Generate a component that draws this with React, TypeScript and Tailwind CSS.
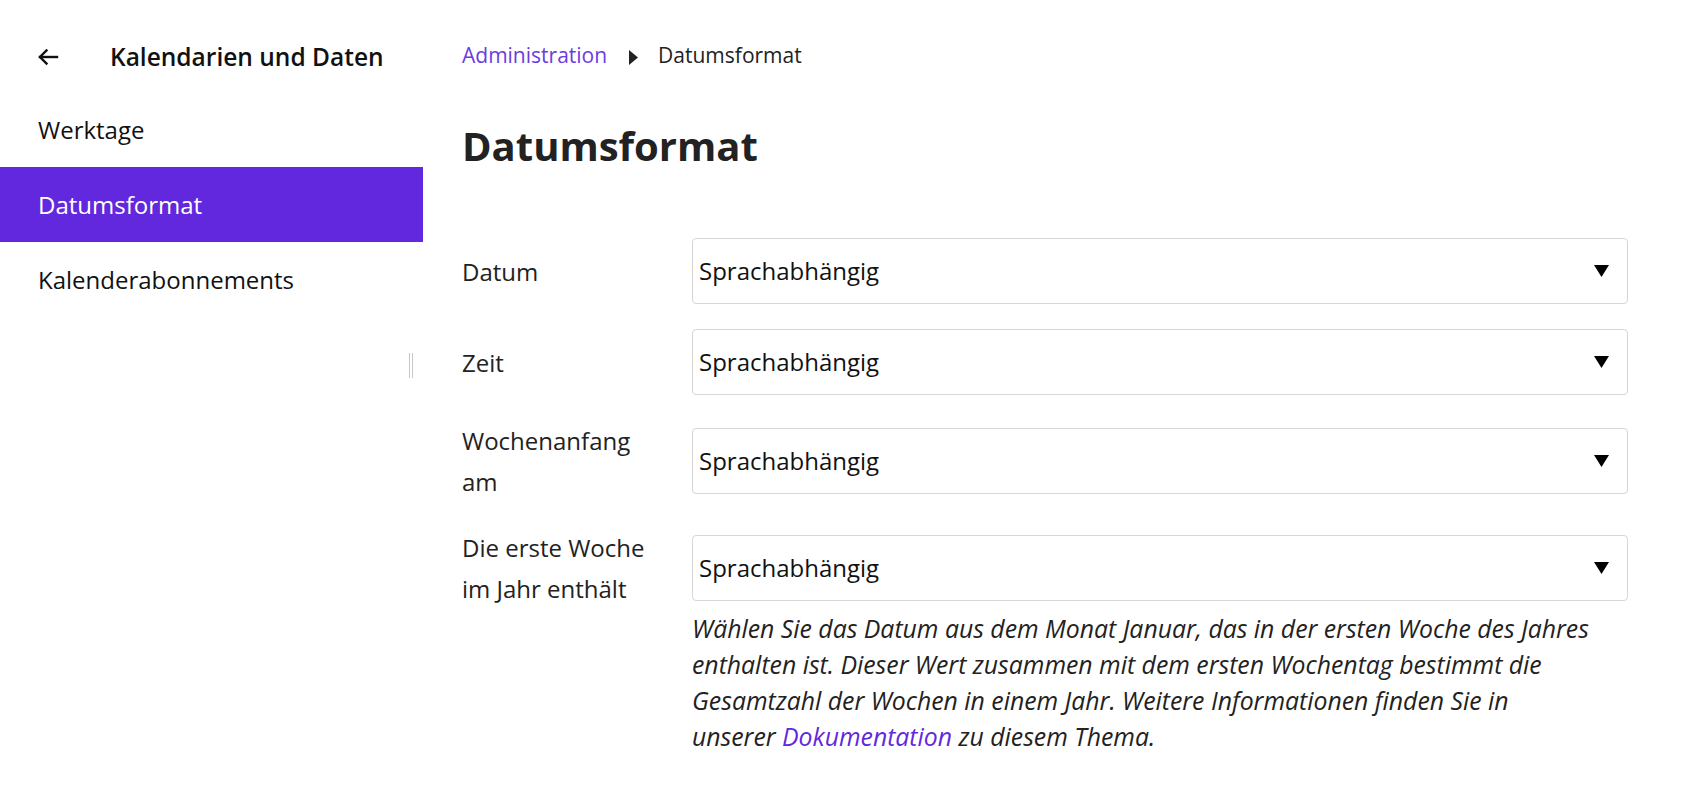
import { useState } from "react";

const FONT = "font-['Open_Sans',_'Noto_Sans',sans-serif]";

function ArrowBack() {
    return (
        <svg width="22" height="18" viewBox="0 0 22 18" fill="none" stroke="#111" strokeWidth="2.4" strokeLinecap="square">
            <path d="M20 9H3" />
            <path d="M9.5 2.5 3 9l6.5 6.5" />
        </svg>
    );
}

function SelectField({ value }: { value: string }) {
    return (
        <div className="relative flex-1">
            <select
                defaultValue={value}
                className="w-full h-[66px] appearance-none rounded-[4px] border border-[#d6d6d6] bg-white pl-[6px] pr-10 text-[24px] text-[#111] outline-none"
            >
                <option>Sprachabhängig</option>
                <option>TT.MM.JJJJ</option>
                <option>JJJJ-MM-TT</option>
            </select>
            {/* dropdown caret */}
            <svg className="pointer-events-none absolute right-[19px] top-[27px]" width="15" height="12" viewBox="0 0 15 12">
                <path d="M0 0h15L7.5 12z" fill="#000" />
            </svg>
        </div>
    );
}

function FormRow({ label, children }: { label: React.ReactNode; children?: React.ReactNode }) {
    return (
        <div className="flex flex-col">
            <div className="flex items-center">
                <label className="w-[230px] shrink-0 pr-6 text-[24px] leading-[41px] text-[#222]">{label}</label>
                <SelectField value="Sprachabhängig" />
            </div>
            {children}
        </div>
    );
}

export default function App() {
    const [active, setActive] = useState("Datumsformat");
    const items = ["Werktage", "Datumsformat", "Kalenderabonnements"];

    return (
        <div className={`${FONT} flex min-h-screen bg-white text-[#222]`}>
            {/* Sidebar */}
            <aside className="relative w-[423px] shrink-0">
                <div className="flex h-[92px] items-center pl-[37px] pt-[22px]">
                    <ArrowBack />
                    <span className="ml-[51px] text-[24.5px] font-semibold text-[#111]">Kalendarien und Daten</span>
                </div>
                <nav className="flex flex-col">
                    {items.map((item) => (
                        <button
                            key={item}
                            onClick={() => setActive(item)}
                            className={`flex h-[75px] items-center pl-[38px] text-left text-[24px] ${
                                active === item ? "bg-[#6228de] text-white" : "text-[#111]"
                            }`}
                        >
                            {item}
                        </button>
                    ))}
                </nav>
                {/* resize handle */}
                <div className="absolute left-[409px] top-[353px] flex h-[25px] gap-[2px]">
                    <div className="w-px bg-[#c8c8c8]" />
                    <div className="w-px bg-[#c8c8c8]" />
                </div>
            </aside>

            {/* Main */}
            <main className="flex-1 pl-[39px]">
                <div className="w-[1166px]">
                    <div className="flex h-[72px] items-end pb-[1px] text-[21px]">
                        <a className="text-[#6a3de2]">Administration</a>
                        <svg className="ml-[22px] mr-[20px] mb-[6px]" width="9" height="15" viewBox="0 0 9 15">
                            <path d="M0 0l9 7.5L0 15z" fill="#222" />
                        </svg>
                        <span className="text-[#222]">Datumsformat</span>
                    </div>
                    <h1 className="mt-[44px] text-[40px] font-bold leading-[60px] text-[#222]">Datumsformat</h1>

                    <div className="mt-[62px] flex flex-col gap-[25px]">
                        <FormRow label="Datum" />
                        <FormRow label="Zeit" />
                        <FormRow label={<>Wochenanfang<br />am</>} />
                        <FormRow label={<>Die erste Woche<br />im Jahr enthält</>}>
                            <p className="ml-[230px] mt-[1px] text-[24.8px] italic leading-[36px] text-[#222]">
                                Wählen Sie das Datum aus dem Monat Januar, das in der ersten Woche des Jahres
                                <br />
                                enthalten ist. Dieser Wert zusammen mit dem ersten Wochentag bestimmt die
                                <br />
                                Gesamtzahl der Wochen in einem Jahr. Weitere Informationen finden Sie in
                                <br />
                                unserer <a className="text-[#6228de]">Dokumentation</a> zu diesem Thema.
                            </p>
                        </FormRow>
                    </div>
                </div>
            </main>
        </div>
    );
}
